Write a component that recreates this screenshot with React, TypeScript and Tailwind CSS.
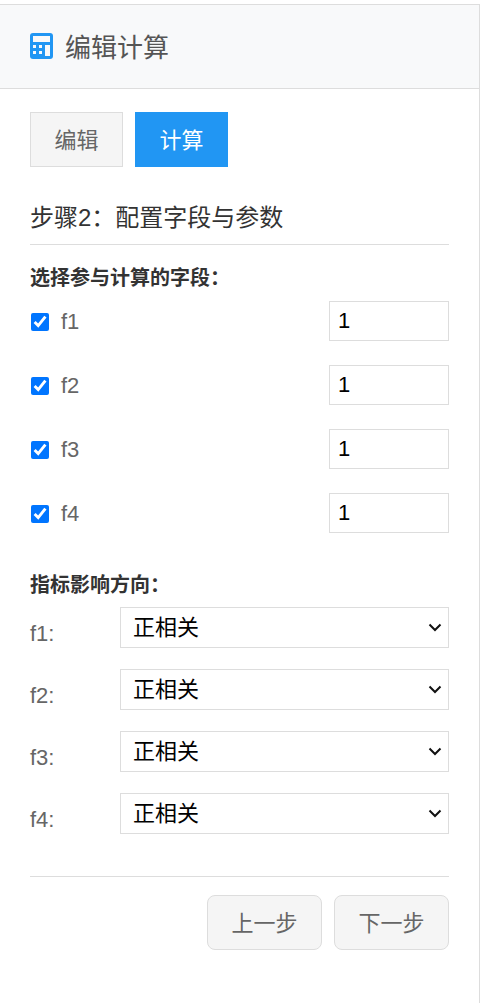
const fields = ['f1', 'f2', 'f3', 'f4'];

function App() {
  return (
    <div className="h-[1003px] bg-white pt-1 font-['Liberation_Sans','Noto_Sans_CJK_SC',sans-serif]">
      <div className="h-[999px] border-t border-r border-[#ddd]">
        <div className="flex h-[84px] items-center gap-3 border-b border-[#ddd] bg-[#f8f9fa] pl-[30px]">
          <svg viewBox="0 0 23 26" className="mb-[2px] h-[26px] w-[23px]">
            <rect width="23" height="26" rx="3" fill="#2196f3" />
            <rect x="3" y="3" width="17" height="6" fill="#f8f9fa" />
            <rect x="3" y="12" width="3" height="3" fill="#f8f9fa" />
            <rect x="9" y="12" width="3" height="3" fill="#f8f9fa" />
            <rect x="15" y="12" width="5" height="3" fill="#f8f9fa" />
            <rect x="3" y="18" width="3" height="3" fill="#f8f9fa" />
            <rect x="9" y="18" width="3" height="3" fill="#f8f9fa" />
            <rect x="15" y="15" width="5" height="8" fill="#f8f9fa" />
          </svg>
          <h1 className="mt-[3px] text-[26px] font-normal text-[#555]">编辑计算</h1>
        </div>

        <div className="px-[30px] pt-[23px]">
          <div className="flex gap-3">
            <button className="h-[55px] w-[93px] border border-[#ddd] bg-[#f5f5f5] pt-[1px] text-[22px] text-[#666]">编辑</button>
            <button className="h-[55px] w-[93px] bg-[#2196f3] pt-[1px] text-[22px] text-white">计算</button>
          </div>

          <h2 className="mt-[33px] h-[45px] border-b border-[#ddd] text-[24px] leading-[36px] font-normal text-[#333]">
            步骤2：配置字段与参数
          </h2>

          <div className="mt-[18px] text-[20px] leading-[30px] font-bold text-[#333]">选择参与计算的字段：</div>
          <div className="mt-2 flex flex-col gap-6">
            {fields.map((name) => (
              <label key={name} className="flex h-10 items-center">
                <input type="checkbox" defaultChecked className="mt-[2px] ml-[1px] h-[18px] w-[18px]" />
                <span className="mt-[2px] ml-[12px] text-[22px] leading-none text-[#666]">{name}</span>
                <input
                  type="text"
                  defaultValue="1"
                  className="ml-auto h-10 w-[120px] border border-[#ddd] px-2 text-[22px] text-black outline-none"
                />
              </label>
            ))}
          </div>

          <div className="mt-[37px] text-[20px] leading-[30px] font-bold text-[#333]">指标影响方向：</div>
          <div className="mt-[7px] flex flex-col gap-[21px]">
            {fields.map((name) => (
              <div key={name} className="flex h-[41px] items-start">
                <span className="mt-[12px] w-[90px] text-[22px] leading-[30px] text-[#666]">{name}:</span>
                <div className="relative w-[329px]">
                  <select className="h-[41px] w-full appearance-none border border-[#ddd] bg-white pl-3 text-[22px] text-black">
                    <option>正相关</option>
                    <option>负相关</option>
                  </select>
                  <svg viewBox="0 0 14 9" className="pointer-events-none absolute top-[16px] right-[7px] h-[9px] w-[14px]">
                    <path d="M1.5 1.5 7 7 12.5 1.5" fill="none" stroke="#111" strokeWidth="2" />
                  </svg>
                </div>
              </div>
            ))}
          </div>

          <div className="mt-[42px] flex justify-end gap-3 border-t border-[#ddd] pt-[18px]">
            <button className="h-[55px] w-[115px] rounded-lg border border-[#ddd] bg-[#f5f5f5] pt-[1px] text-[22px] text-[#666]">上一步</button>
            <button className="h-[55px] w-[115px] rounded-lg border border-[#ddd] bg-[#f5f5f5] pt-[1px] text-[22px] text-[#666]">下一步</button>
          </div>
        </div>
      </div>
    </div>
  );
}

export default App;
